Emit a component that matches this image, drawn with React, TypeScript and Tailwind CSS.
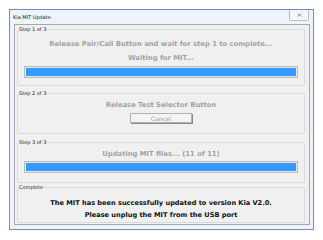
import React from 'react';

const font = { fontFamily: '"DejaVu Sans", Verdana, sans-serif' };

function Group({ label, className, children }: { label: string; className: string; children: React.ReactNode }) {
  return (
    <div className={`border border-[#d5dbe0] rounded-[2px] ${className}`}>
      <div className="-mt-[3px] ml-[1px] w-fit bg-[#f0f0f0] pr-[1px] text-[5px] leading-[5px] text-[#222]">{label}</div>
      {children}
    </div>
  );
}

function Bar() {
  return (
    <div className="mx-[6px] h-[12px] border border-[#bcbcbc] bg-[#e6e6e6] p-[1px]">
      <div className="h-full w-full bg-[#3399ff]" />
    </div>
  );
}

export default function App() {
  return (
    <div className="h-[240px] w-[323px] bg-white pl-[9px] pt-[9px]" style={font}>
      <div className="flex h-[221px] w-[305px] flex-col border border-[#6d8fc6] bg-[#eef3fa] pl-[4px] pr-[3px] pb-[4px]">
        <div className="flex h-[14px] items-start justify-between">
          <span className="mt-[4px] ml-[-1px] text-[5px] leading-[6px] text-[#111]">Kia MIT Update</span>
          <div className="mr-[1px] flex h-[11px] w-[20px] items-center justify-center rounded-b-[2px] border border-t-0 border-[#b4bdca] bg-[#f4f6f9]">
            <svg width="5" height="4" viewBox="0 0 5 4">
              <path d="M0.5 0.5 L4.5 3.5 M4.5 0.5 L0.5 3.5" stroke="#8a8f98" strokeWidth="0.9" />
            </svg>
          </div>
        </div>
        <div className="flex flex-1 flex-col border border-[#a5a9b0] bg-[#f0f0f0] pl-[2px] pr-[4px] pt-[4px]">
          <Group label="Step 1 of 3" className="h-[57px]">
            <div className="mt-[8px] text-center text-[6.8px] font-bold leading-[8px] text-[#a3a3a3]">
              Release Pair/Call Button and wait for step 1 to complete...
            </div>
            <div className="mt-[6px] text-center text-[6.8px] font-bold leading-[8px] text-[#a3a3a3]">Waiting for MIT...</div>
            <div className="mt-[4px]">
              <Bar />
            </div>
          </Group>
          <Group label="Step 2 of 3" className="mt-[7px] h-[41px]">
            <div className="mt-[5px] text-center text-[6.8px] font-bold leading-[8px] text-[#a3a3a3]">Release Test Selector Button</div>
            <div className="mt-[4px] flex justify-center">
              <div className="flex h-[10px] w-[62px] items-center justify-center border border-[#adb2b5] bg-[#f4f4f4] text-[6px] text-[#a3a3a3] shadow-[1px_1px_0_#8a8a8a]">
                Cancel
              </div>
            </div>
          </Group>
          <Group label="Step 3 of 3" className="mt-[8px] h-[41px]">
            <div className="mt-[5px] text-center text-[6.8px] font-bold leading-[8px] text-[#a3a3a3]">
              Updating MIT files... (11 of 11)
            </div>
            <div className="mt-[3px]">
              <Bar />
            </div>
          </Group>
          <Group label="Complete" className="mt-[4px] h-[36px]">
            <div className="mt-[7px] text-center text-[6.6px] font-bold leading-[12px] text-[#111]">
              The MIT has been successfully updated to version Kia V2.0.
              <br />
              Please unplug the MIT from the USB port
            </div>
          </Group>
        </div>
      </div>
    </div>
  );
}
